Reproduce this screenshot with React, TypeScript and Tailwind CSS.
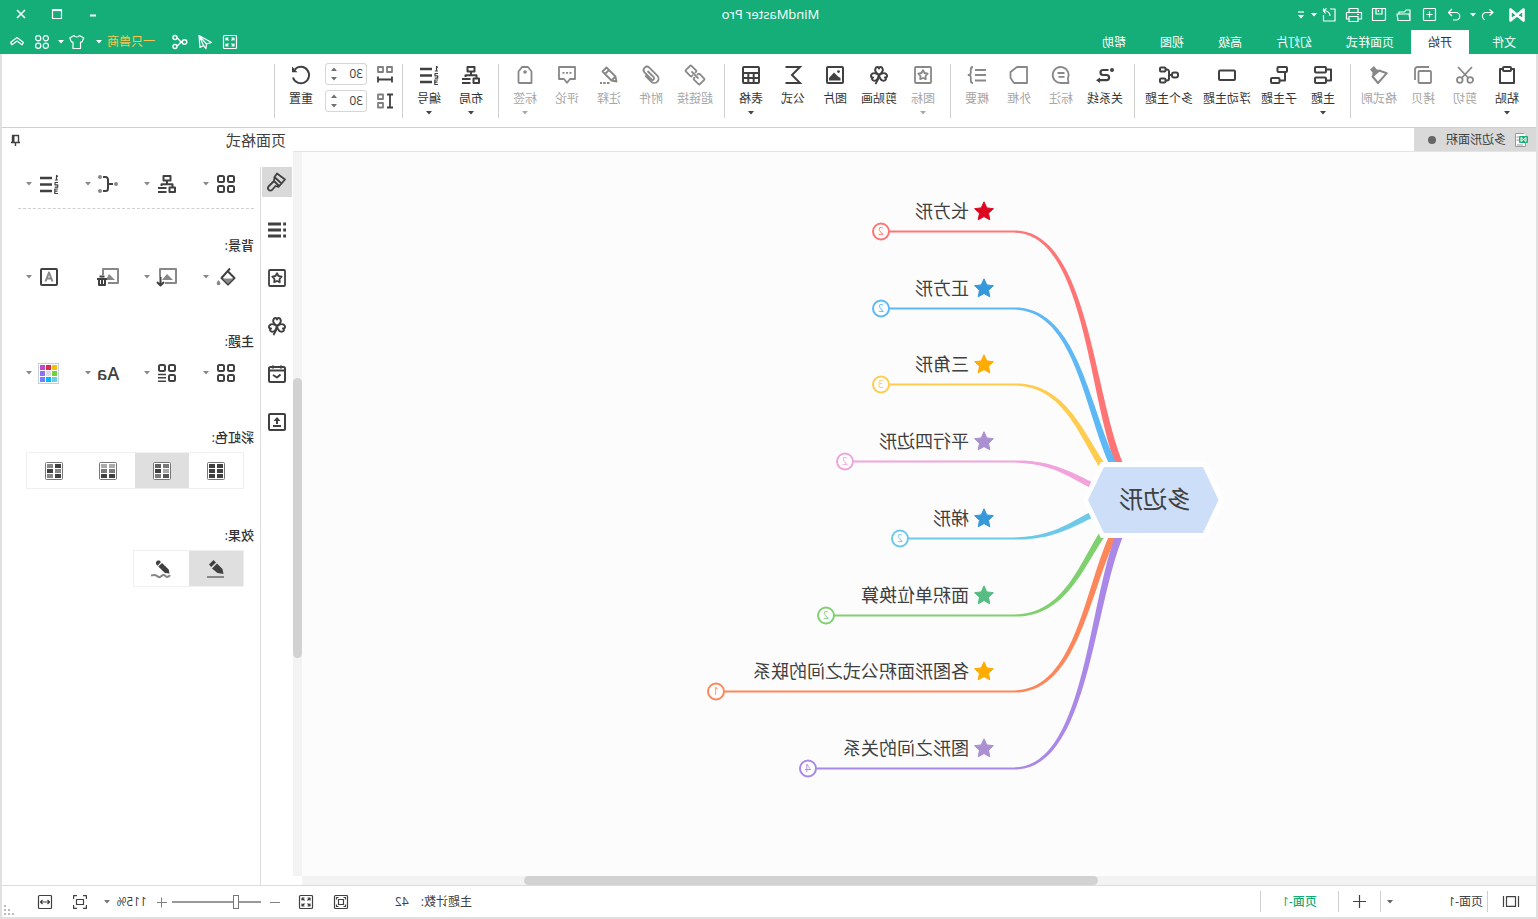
import type { ReactNode } from "react";
import { useState } from "react";

/* ---------- shared pieces ---------- */

type IconProps = { children: ReactNode; w?: number; h?: number; sw?: number; className?: string };

function Icon({ children, w = 18, h = 18, sw = 2, className = "" }: IconProps) {
  return (
    <svg
      width={w}
      height={h}
      viewBox={`0 0 ${w} ${h}`}
      fill="none"
      stroke="currentColor"
      strokeWidth={sw}
      strokeLinejoin="round"
      className={`shrink-0 overflow-visible ${className}`}
      aria-hidden="true"
    >
      {children}
    </svg>
  );
}

const solid = { fill: "currentColor", stroke: "none" };

function Caret({ className = "" }: { className?: string }) {
  return (
    <svg width="6" height="4" viewBox="0 0 6 4" className={`shrink-0 ${className}`} aria-hidden="true">
      <path d="M0 0h6L3 3.6z" fill="currentColor" />
    </svg>
  );
}

const STAR = "M9 4.3l1.500 2.700 3.200.7-2.200 2.300.3 3.200L9 12l-2.800 1.200.3-3.200-2.200-2.300 3.200-.7z";
const HEART = "M9 9.2C6.2 7 4.800 5.600 5.200 3.400 5.700.7 8.500.2 9 2.600c.5-2.400 3.300-1.900 3.800.8.4 2.200-1 3.600-3.800 5.800z";

const icons = {
  paste: (
    <Icon>
      <path d="M5 3H2v14h14V3h-3" />
      <rect x="5" y="1" width="8" height="4" rx="1" />
    </Icon>
  ),
  cut: (
    <Icon sw={1.8}>
      <circle cx="3.8" cy="14" r="2.8" />
      <circle cx="14.2" cy="14" r="2.8" />
      <path d="M2 1l10.3 11M16 1L5.7 12" />
    </Icon>
  ),
  copy: (
    <Icon sw={1.8}>
      <rect x="1" y="5" width="12.5" height="12" rx="1" />
      <path d="M3 1h11.5A2.5 2.5 0 0 1 17 3.500V14" />
    </Icon>
  ),
  format: (
    <Icon sw={2}>
      <path d="M1.200 7.200L9 4.500l6.500 6-5.500 6.500z" />
      <path d="M7.500 4.800L11.500 3.200 14 0l2 1.800 2 1.800-2.500 2.800.5 4.800z" {...solid} />
    </Icon>
  ),
  topic: (
    <Icon>
      <rect x="6" y="1" width="11" height="5.500" rx="1" />
      <rect x="6" y="11.500" width="11" height="5.500" rx="1" />
      <path d="M6 3.500H1v11h5" />
    </Icon>
  ),
  subtopic: (
    <Icon>
      <rect x="1" y="1" width="9.500" height="5" rx="1" />
      <rect x="8.500" y="12" width="8.500" height="5" rx="1" />
      <path d="M3 6v8.500h5.500" />
    </Icon>
  ),
  floating: (
    <Icon>
      <rect x="1" y="4.500" width="16" height="9.500" rx="1" />
    </Icon>
  ),
  multi: (
    <Icon w={20}>
      <rect x="1" y="6.500" width="6" height="5" rx="2" />
      <rect x="13.500" y="1.500" width="5.500" height="4" rx="1" />
      <rect x="13.500" y="12.500" width="5.500" height="4" rx="1" />
      <path d="M13.500 3.500h-1.500a2 2 0 0 0-2 2v7a2 2 0 0 0 2 2h1.500M7 9h3" />
    </Icon>
  ),
  relation: (
    <Icon sw={2.2}>
      <circle cx="2" cy="4" r="2" {...solid} />
      <path d="M5.500 4h5.500a2.500 2.500 0 0 1 0 5H7.500a2.600 2.600 0 0 0 0 5.200H14" />
      <path d="M14 11.400l4 2.800-4 2.800z" {...solid} />
    </Icon>
  ),
  callout: (
    <Icon sw={1.8}>
      <path d="M1.500 17l.6-4.500A8 8 0 1 1 9 17z" />
      <path d="M5.500 7h7M5.500 10.800h6" />
    </Icon>
  ),
  boundary: (
    <Icon sw={1.8}>
      <path d="M1 1h10l6.500 5v6L14 17H1z" />
    </Icon>
  ),
  summary: (
    <Icon sw={1.8}>
      <path d="M0 4h11M0 9h11M0 14.500h11" />
      <path d="M13 1c1.800 0 2.200.8 2.200 2.500V6.500c0 1.500.8 2.500 2.300 2.500-1.500 0-2.300 1-2.300 2.500v3c0 1.700-.4 2.500-2.200 2.500" />
    </Icon>
  ),
  mark: (
    <Icon sw={1.8}>
      <rect x="1" y="1" width="16" height="16" rx="1" />
      <path d={STAR} />
    </Icon>
  ),
  clover: (
    <Icon sw={2}>
      <path d={HEART} />
      <path d={HEART} transform="rotate(-112 9 9)" />
      <path d={HEART} transform="rotate(112 9 9)" />
      <path d="M9 9c.5 4 1.500 6.500 3.600 9" />
    </Icon>
  ),
  picture: (
    <Icon>
      <rect x="1" y="1" width="16" height="16" rx="1" />
      <circle cx="5.500" cy="5.600" r="1.400" {...solid} />
      <path d="M3.500 14.500V12L6 10.500l4-4 5 5.500v2.500z" {...solid} />
    </Icon>
  ),
  formula: (
    <Icon sw={2}>
      <path d="M16.500 1H2l8 8-8 8h14.500" strokeLinejoin="miter" />
    </Icon>
  ),
  table: (
    <Icon>
      <rect x="1" y="1" width="16" height="16" rx="1" />
      <path d="M1 7h16M1 12h16M6.300 7v10M11.700 7v10" />
    </Icon>
  ),
  link: (
    <Icon sw={1.8}>
      <g transform="rotate(-45 9 9)">
        <path d="M7.500 7.600V6a1 1 0 0 0-1-1H0a1 1 0 0 0-1 1v6a1 1 0 0 0 1 1h6.500a1 1 0 0 0 1-1v-1.600" />
        <path d="M10.500 7.600V6a1 1 0 0 1 1-1H18a1 1 0 0 1 1 1v6a1 1 0 0 1-1 1h-6.500a1 1 0 0 1-1-1v-1.600" />
        <path d="M4 9h10" />
      </g>
    </Icon>
  ),
  attach: (
    <Icon sw={1.8}>
      <path d="M12.500 5.500l-6.200 6.200a1.500 1.500 0 0 0 2.200 2.200l7-7a3.400 3.400 0 0 0-4.800-4.800l-8 8a4.300 4.300 0 0 0 6.100 6.100l6-6" transform="translate(0 -.5)" />
    </Icon>
  ),
  note: (
    <Icon sw={1.8}>
      <path d="M1.500 15.500l1-5L11.500 1.500l4 4-9 9zM9 4l4 4M2.500 10.500l4 4" />
      <path d="M8.500 17h2.500M12.300 17h2.500M16 17h2" />
    </Icon>
  ),
  comment: (
    <Icon sw={1.8}>
      <path d="M1 1h16v12h-5l-3 3.800L6 13H1z" />
      <path d="M4.500 6.800h2M8 6.800h2M11.500 6.800h2" />
    </Icon>
  ),
  tag: (
    <Icon sw={1.8}>
      <path d="M2.500 17V5.500L6 1h6l3.500 4.500V16a1 1 0 0 1-1 1z" />
      <circle cx="9" cy="6" r="1.800" {...solid} />
    </Icon>
  ),
  layout: (
    <Icon>
      <rect x="5.500" y="1" width="7" height="4.500" />
      <rect x="1" y="12.500" width="5.500" height="4.500" />
      <path d="M9 5.500V9M3.500 12.500V9.300h11v1.700M9.500 13h8.500M9.500 17h8.500" />
    </Icon>
  ),
  numbering: (
    <Icon>
      <path d="M6 3h12M6 9.500h12M6 16h12" strokeWidth="2.600" />
      <path d="M0 1.500L1.500.5V5M0 5h3.200M0 7.500h3v2.300H.3v2.400h3M0 14h3.200v4.500H0M.5 16.200h2.500" strokeWidth="1.200" />
    </Icon>
  ),
  hspace: (
    <Icon w={16} h={16} sw={1.8}>
      <rect x="1" y="1" width="5" height="5" stroke="#808080" />
      <rect x="10" y="1" width="5" height="5" stroke="#808080" />
      <path d="M1 10.500v6M15 10.500v6M1 13.500h14" />
    </Icon>
  ),
  vspace: (
    <Icon w={16} h={16} sw={1.8}>
      <rect x="10" y="1.500" width="5" height="4.500" stroke="#808080" />
      <rect x="10" y="10" width="5" height="4.500" stroke="#808080" />
      <path d="M0 1.500h6M0 14.500h6M3 1.500v13" />
    </Icon>
  ),
  reset: (
    <Icon w={20} h={20} sw={2}>
      <path d="M2 12.500A8.200 8.200 0 1 0 3.800 4.500" transform="matrix(-1 0 0 1 20 0)" />
      <path d="M19 1.500v5.700h-5.500z" {...solid} />
    </Icon>
  ),
  grid4: (
    <Icon>
      <rect x="1" y="1" width="6" height="6" rx="1.500" />
      <rect x="11" y="1" width="6" height="6" rx="1.500" />
      <rect x="1" y="11" width="6" height="6" rx="1.500" />
      <rect x="11" y="11" width="6" height="6" rx="1.500" />
    </Icon>
  ),
  gridLines: (
    <Icon>
      <rect x="1" y="1" width="6" height="6" rx="1.500" />
      <rect x="11" y="1" width="6" height="6" rx="1.500" />
      <rect x="1" y="11" width="6" height="6" rx="1.500" />
      <path d="M10 10.500h8M10 13.800h8M10 17.200h8" strokeWidth="1.600" />
    </Icon>
  ),
  branch: (
    <Icon w={20} sw={2}>
      <path d="M15 2h-2.500a2.500 2.500 0 0 0-2.500 2.500v9a2.500 2.500 0 0 0 2.500 2.500h2.500M5 9h5" />
      <g fill="#888" stroke="none">
        <circle cx="2" cy="9" r="2" />
        <circle cx="18" cy="2" r="2" />
        <circle cx="18" cy="16" r="2" />
      </g>
    </Icon>
  ),
  fill: (
    <Icon w={20} h={20} sw={2}>
      <path d="M6 1.500l8.500 9.500L8 17.500 1.500 11 8 4.500" />
      <path d="M2.500 11.500h11L8 17z" fill="#888" stroke="none" />
      <path d="M17.500 13c1.500 2 2.200 3 1.600 4.300a1.900 1.900 0 0 1-3.400 0c-.5-1.200.3-2.300 1.800-4.300z" fill="#888" stroke="none" />
    </Icon>
  ),
  bgInsert: (
    <Icon w={20} h={20} sw={2}>
      <path d="M12 16H1V2h16v8" stroke="#888" />
      <path d="M4 13l6-6 5 6z" fill="#888" stroke="none" />
      <path d="M16.500 10v7M13 15l3.500 3.500 3.500-3.500" />
    </Icon>
  ),
  bgDelete: (
    <Icon w={22} h={20} sw={2}>
      <path d="M11 16H1V2h15v6" stroke="#888" />
      <path d="M4 13l6-6 3 6z" fill="#888" stroke="none" />
      <path d="M12 12h10M14 13v5h6v-5M17 13v5M14.500 9.500h5" />
    </Icon>
  ),
  watermark: (
    <Icon>
      <rect x="1" y="1" width="16" height="16" rx="1" />
      <path d="M5.500 13.500L9 4.500l3.500 9M6.500 10.500h5" stroke="#888" />
    </Icon>
  ),
  brush: (
    <Icon w={20} h={20} sw={1.800}>
      <path d="M2 7.500l8-6 2.500 3.500 .5 4 5.500 5.500a2.500 2.500 0 0 1-3.500 3.500l-3.500-4-3 .8zM5.500 11.500l6.500-6M8 14l5-5" />
    </Icon>
  ),
  outline: (
    <Icon>
      <path d="M5 3h13M5 9h13M5 15h13M0 3h2.800M0 9h2.800M0 15h2.800" strokeWidth="2.800" />
    </Icon>
  ),
  calendar: (
    <Icon>
      <rect x="1" y="2" width="16" height="15" rx="1.500" />
      <path d="M1 5.500h16M5 .5v3M13 .5v3M5.500 9.500l3.500 3 4-2.500" />
    </Icon>
  ),
  upload: (
    <Icon>
      <rect x="1" y="1" width="16" height="16" rx="1" />
      <path d="M5 13h8M9 11V6.500" />
      <path d="M5.500 8L9 4l3.500 4z" {...solid} />
    </Icon>
  ),
};

/* ---------- header ---------- */

function Glyph({ children, sw = 1.200 }: { children: ReactNode; sw?: number }) {
  return (
    <Icon w={14} h={14} sw={sw}>
      {children}
    </Icon>
  );
}

const fullscreen = (
  <>
    <rect x=".5" y=".5" width="13" height="13" rx="1" />
    <path d="M3 5.500V3h2.500M8.500 3H11v2.500M11 8.500V11H8.500M5.500 11H3V8.500M3 3l2.500 2.500M11 3L8.500 5.500M11 11L8.500 8.500M3 11l2.500-2.500" />
  </>
);

const quick: { name: string; icon: ReactNode }[] = [
  { name: "重做", icon: <Glyph><path d="M5 1L1.500 4.500 5 8M1.500 4.500h7.500a3.700 3.700 0 0 1 0 7.500H6" transform="matrix(-1 0 0 1 14 0)" /></Glyph> },
  { name: "新建", icon: <Glyph><rect x=".5" y=".5" width="12" height="12" rx="1" /><path d="M6.500 3.500v6M3.500 6.500h6" /></Glyph> },
  { name: "打开", icon: <Glyph><path d="M1 12V2h4l1.500 2H12v2M1 12.500l1-6.500h12l-1 6.500z" /></Glyph> },
  { name: "保存", icon: <Glyph><path d="M.5 .5h13v12h-12l-1-1zM4 .5v5.500h6V.5M7.500 2v2" /></Glyph> },
  { name: "打印", icon: <Glyph><path d="M3 4V.5h9V4M3 11H-.5V4.500h15V11H12M3 8.500h9v5H3zM2 6.500h2" /></Glyph> },
  { name: "导出", icon: <Glyph><path d="M6 1H1v12h11.500V7M12.500 .5v3M6 8c0-3.500 2-5 6-5.500M9.500 .5l3 2-2 3" /></Glyph> },
];

function TitleBar() {
  return (
    <div className="flex h-7 items-center">
      <div className="flex flex-1 items-center pt-[2px]">
        <svg width="16" height="14" viewBox="0 0 16 14" className="ml-[13px] mr-2" role="img" aria-label="MindMaster">
          <path d="M1.500 12.500v-11L8 7l6.500-5.500v11L8 7z" fill="none" stroke="#fff" strokeWidth="2.600" strokeLinejoin="round" />
          <circle cx="8" cy="7" r="2.200" fill="#fff" />
        </svg>
        <button aria-label="撤销" className="flex w-[25px] justify-center">
          <Glyph><path d="M5.500 1.500l-3.500 3 3.500 3M2 4.500h7a3.500 3.500 0 0 1 3 5.500L10.500 12" /></Glyph>
        </button>
        <Caret className="mr-[3px]" />
        {quick.map((q) => (
          <button key={q.name} aria-label={q.name} className="flex w-[25px] justify-center">
            {q.icon}
          </button>
        ))}
        <Caret className="mr-[7px]" />
        <button aria-label="自定义快速访问">
          <Icon w={6} h={8} sw={1.200}>
            <path d="M0 1h6" />
            <path d="M0 4h6L3 7.500z" {...solid} />
          </Icon>
        </button>
      </div>
      <h1 className="text-[13px] leading-4">MindMaster Pro</h1>
      <div className="flex flex-1 items-center justify-end pr-[3px]">
        <button aria-label="最小化" className="flex w-9 justify-center">
          <Icon w={10} h={10}><path d="M2 6.500h6" /></Icon>
        </button>
        <button aria-label="最大化" className="flex w-9 justify-center">
          <Icon w={10} h={10} sw={1.200}><path d="M.5 .5h9v9h-9z" /><path d="M0 1.500h10" /></Icon>
        </button>
        <button aria-label="关闭" className="flex w-9 justify-center">
          <Icon w={8} h={8} sw={1.600}><path d="M0 0l8 8M8 0L0 8" /></Icon>
        </button>
      </div>
    </div>
  );
}

const tabs = ["文件", "开始", "页面样式", "幻灯片", "高级", "视图", "帮助"];

function MenuBar() {
  return (
    <div className="flex h-[26px] items-end text-xs">
      <nav className="flex flex-1 items-end pl-[5px]">
        {tabs.map((t) => (
          <a
            key={t}
            href="#"
            className={
              t === "开始"
                ? "flex h-6 items-center bg-white px-[17px] pt-0.5 text-[#333]"
                : t === "文件"
                  ? "mr-1.5 flex h-6 items-center px-[17px] pt-0.5"
                  : "flex h-6 items-center px-[17px] pt-0.5"
            }
          >
            {t}
          </a>
        ))}
      </nav>
      <div className="flex h-6 items-center pr-[5px]">
        <button aria-label="全屏" className="flex w-[25px] justify-center"><Glyph>{fullscreen}</Glyph></button>
        <button aria-label="发送" className="flex w-[25px] justify-center">
          <Glyph><path d="M13 .5L.5 7.500l5 1.500zM13 .5L12 12.500 8.500 10.500 6 13.500 5.500 9M13 .5L8.500 10.500" /></Glyph>
        </button>
        <button aria-label="分享" className="mr-3 flex w-[25px] justify-center">
          <Glyph sw={1.400}><circle cx="2.500" cy="7" r="2.300" /><circle cx="12" cy="2.500" r="2" /><circle cx="12" cy="11.500" r="2" /><path d="M4.800 7c3 0 3-3.500 5.300-4M4.800 7c3 0 3 3.500 5.300 4" /></Glyph>
        </button>
        <button className="mr-3 flex items-center gap-[5px] text-[#f9c54e]">
          一只兽商
          <Caret className="text-white" />
        </button>
        <button aria-label="皮肤" className="mr-[3px] flex items-center gap-1.5">
          <Glyph><path d="M4.500 .5L.3 3l1.700 4h1.500v6.500h7.500V7h1.500l1.700-4L10 .5C9 2.500 5.500 2.500 4.500 .5z" /></Glyph>
          <Caret />
        </button>
        <button aria-label="应用" className="flex w-[25px] justify-center">
          <Glyph><circle cx="3.200" cy="3.200" r="2.600" /><circle cx="10.800" cy="3.200" r="2.600" /><circle cx="3.200" cy="10.800" r="2.600" /><circle cx="10.800" cy="10.800" r="2.600" /></Glyph>
        </button>
        <button aria-label="收起功能区" className="flex w-[25px] justify-center">
          <Glyph><path d="M.5 7.500L7 2.500l6.500 5-1.500 2.300L7 6 2 9.800z" /></Glyph>
        </button>
      </div>
    </div>
  );
}

/* ---------- ribbon ---------- */

type Tool = { label: string; icon: ReactNode; off?: boolean; menu?: boolean };

const groups: Tool[][] = [
  [
    { label: "粘贴", icon: icons.paste, menu: true },
    { label: "剪切", icon: icons.cut, off: true },
    { label: "拷贝", icon: icons.copy, off: true },
    { label: "格式刷", icon: icons.format, off: true },
  ],
  [
    { label: "主题", icon: icons.topic, menu: true },
    { label: "子主题", icon: icons.subtopic },
    { label: "浮动主题", icon: icons.floating },
    { label: "多个主题", icon: icons.multi },
  ],
  [
    { label: "关系线", icon: icons.relation },
    { label: "标注", icon: icons.callout, off: true },
    { label: "外框", icon: icons.boundary, off: true },
    { label: "概要", icon: icons.summary, off: true },
  ],
  [
    { label: "图标", icon: icons.mark, off: true, menu: true },
    { label: "剪贴画", icon: icons.clover },
    { label: "图片", icon: icons.picture },
    { label: "公式", icon: icons.formula },
    { label: "表格", icon: icons.table, menu: true },
  ],
  [
    { label: "超链接", icon: icons.link, off: true },
    { label: "附件", icon: icons.attach, off: true },
    { label: "注释", icon: icons.note, off: true },
    { label: "评论", icon: icons.comment, off: true },
    { label: "标签", icon: icons.tag, off: true, menu: true },
  ],
  [
    { label: "布局", icon: icons.layout, menu: true },
    { label: "编号", icon: icons.numbering, menu: true },
  ],
];

const toolWidth: Record<number, string> = { 2: "w-[42px]", 3: "w-[46px]", 4: "w-[58px]" };

function ToolButton({ tool }: { tool: Tool }) {
  return (
    <button className={`flex flex-col items-center pt-3 ${toolWidth[tool.label.length]}`}>
      <span className={tool.off ? "text-[#888]" : "text-[#404040]"}>{tool.icon}</span>
      <span className={tool.off ? "mt-[7px] text-xs text-[#a6a6a6]" : "mt-[7px] text-xs text-[#333]"}>{tool.label}</span>
      {tool.menu && <Caret className={tool.off ? "mt-1 text-[#aaa]" : "mt-1 text-[#444]"} />}
    </button>
  );
}

function Rule() {
  return <div className="ml-[5px] mr-1.5 mt-2.5 h-[54px] w-px bg-[#cfcfcf]" />;
}

function Spinner({ label, icon }: { label: string; icon: ReactNode }) {
  const [value, setValue] = useState(30);
  return (
    <div className="flex items-center gap-2.5 text-[#404040]">
      {icon}
      <div className="flex h-[22px] w-[42px] items-center rounded-[3px] border border-[#d6d6d6]">
        <input
          aria-label={label}
          value={value}
          onChange={(e) => setValue(Number(e.target.value) || 0)}
          className="w-[29px] bg-transparent pl-[3px] text-xs outline-none"
        />
        <div className="flex flex-col gap-1.5 text-[#707070]">
          <button aria-label={`${label}增加`} onClick={() => setValue(value + 1)}>
            <Caret className="block rotate-180" />
          </button>
          <button aria-label={`${label}减少`} onClick={() => setValue(value - 1)}>
            <Caret className="block" />
          </button>
        </div>
      </div>
    </div>
  );
}

function Ribbon() {
  return (
    <div className="flex h-[74px] items-start border-b border-[#d0d0d0] bg-white pl-2">
      {groups.map((g, i) => (
        <div key={i} className="flex">
          {g.map((t) => (
            <ToolButton key={t.label} tool={t} />
          ))}
          <Rule />
        </div>
      ))}
      <div className="ml-[3px] mr-[3px] flex flex-col gap-[5px] pt-[9px]">
        <Spinner label="水平间距" icon={icons.hspace} />
        <Spinner label="垂直间距" icon={icons.vspace} />
      </div>
      <button className="flex w-[42px] flex-col items-center pt-[11px] text-[#404040]">
        {icons.reset}
        <span className="mt-1.5 text-xs text-[#333]">重置</span>
      </button>
      <Rule />
    </div>
  );
}

/* ---------- mind map ---------- */

type Branch = { label: string; count: number; line: string; star: string; y: number; end: number; pull: number };

const branches: Branch[] = [
  { label: "长方形", count: 2, line: "#ff7575", star: "#dc0820", y: 79, end: 655, pull: 429 },
  { label: "正方形", count: 2, line: "#5eb8f5", star: "#3498db", y: 156, end: 655, pull: 436 },
  { label: "三角形", count: 3, line: "#ffcc50", star: "#ffab00", y: 232, end: 655, pull: 444 },
  { label: "平行四边形", count: 2, line: "#f2a3dc", star: "#aa90d0", y: 309, end: 691, pull: 458 },
  { label: "梯形", count: 2, line: "#6cc9e8", star: "#3498db", y: 386, end: 636, pull: 458 },
  { label: "面积单位换算", count: 2, line: "#80d070", star: "#56bc82", y: 463, end: 710, pull: 444 },
  { label: "各图形面积公式之间的联系", count: 1, line: "#fb875a", star: "#ffab00", y: 539, end: 820, pull: 436 },
  { label: "图形之间的关系", count: 4, line: "#aa88e8", star: "#aa90d0", y: 616, end: 728, pull: 429 },
];

const ROOT = { x: 382, y: 348 };
const JOINT = 522;

/* Outline of a stroke that narrows from the central topic to the branch line. */
function taper(y: number, pull: number) {
  const xs = [ROOT.x, 449, pull, JOINT];
  const ys = [ROOT.y, ROOT.y, y, y];
  const left: string[] = [];
  const right: string[] = [];
  const steps = 48;
  for (let i = 0; i <= steps; i++) {
    const t = i / steps;
    const u = 1 - t;
    const at = (p: number[]) => u * u * u * p[0] + 3 * u * u * t * p[1] + 3 * u * t * t * p[2] + t * t * t * p[3];
    const slope = (p: number[]) => 3 * u * u * (p[1] - p[0]) + 6 * u * t * (p[2] - p[1]) + 3 * t * t * (p[3] - p[2]);
    const dx = slope(xs);
    const dy = slope(ys);
    const len = Math.hypot(dx, dy) || 1;
    const half = (9 - 6.8 * t) / 2;
    const ox = (-dy / len) * half;
    const oy = (dx / len) * half;
    left.push(`${(at(xs) + ox).toFixed(2)} ${(at(ys) + oy).toFixed(2)}`);
    right.unshift(`${(at(xs) - ox).toFixed(2)} ${(at(ys) - oy).toFixed(2)}`);
  }
  return `M${left.join("L")}L${right.join("L")}Z`;
}

function MindMap() {
  return (
    <main className="relative min-w-0 flex-1 overflow-hidden bg-[#fcfcfc]">
      <svg className="absolute left-0 top-0 h-full w-full" aria-hidden="true">
        {branches.map((b) => (
          <g key={b.label}>
            <path d={taper(b.y + 0.5, b.pull)} fill={b.line} />
            <path d={`M${JOINT} ${b.y + 0.5}H${b.end - 8}`} stroke={b.line} strokeWidth="2.200" />
            <circle cx={b.end} cy={b.y + 0.5} r="8" fill="#fff" stroke={b.line} strokeWidth="2" />
          </g>
        ))}
        <path d="M317.500 348L333 315h99l16 33-16 33h-99z" fill="#fff" stroke="#fff" strokeWidth="10" />
        <path d="M317.500 348L333 315h99l16 33-16 33h-99z" fill="#cddef8" />
      </svg>
      <div className="absolute left-[317px] top-[314px] flex h-[66px] w-[128px] items-center justify-center text-2xl text-[#404040]">
        多边形
      </div>
      {branches.map((b) => (
        <div key={b.label}>
          <div
            className="absolute flex items-center gap-[5px] whitespace-nowrap text-lg leading-6 text-[#404040]"
            style={{ left: 542, top: b.y - 32 }}
          >
            <svg width="20" height="20" viewBox="0 0 20 20" aria-hidden="true">
              <path
                d="M10 .8l2.800 6.100 6.600.8-4.900 4.500 1.300 6.600L10 15.600l-5.800 3.200 1.300-6.600L.6 7.700l6.600-.8z"
                fill={b.star}
                stroke={b.star}
                strokeLinejoin="round"
              />
            </svg>
            {b.label}
          </div>
          <button
            aria-label={`展开${b.label}`}
            className="absolute flex h-4 w-4 items-center justify-center text-[10px] leading-4"
            style={{ left: b.end - 8, top: b.y - 8, color: b.line }}
          >
            {b.count}
          </button>
        </div>
      ))}
    </main>
  );
}

function CanvasColumn() {
  return (
    <section className="flex min-w-0 flex-1 flex-col">
      <div className="flex h-6 border-b border-[#e4e4e4] bg-white">
        <div className="flex w-[122px] items-center bg-[#d9d9d9] pl-2 text-xs text-[#404040]">
          <svg width="14" height="14" viewBox="0 0 14 14" className="mr-2 shrink-0" aria-hidden="true">
            <path d="M4 .5h8.500v13H2.500V3" fill="#fff" stroke="#999" />
            <path d="M8.500 4h3M8.500 7h3M5 12h6" stroke="#999" />
            <rect y="3" width="9" height="7" rx="1" fill="#15b377" />
            <path d="M2 8.500v-4l2.500 2 2.500-2v4l-2.500-2z" fill="none" stroke="#fff" />
          </svg>
          多边形面积
          <span className="ml-2.5 h-2 w-2 rounded-full bg-[#666]" />
        </div>
      </div>
      <div className="flex min-h-0 flex-1">
        <MindMap />
        <div className="w-[9px] bg-[#f3f3f3] pt-[226px]">
          <div className="h-[280px] rounded-full bg-[#d2d2d2]" />
        </div>
      </div>
      <div className="mr-[9px] h-[9px] bg-[#f3f3f3] pl-[438px]">
        <div className="h-[9px] w-[574px] rounded-full bg-[#d2d2d2]" />
      </div>
    </section>
  );
}

/* ---------- side panel ---------- */

function PanelTool({ label, icon, menu = true }: { label: string; icon: ReactNode; menu?: boolean }) {
  return (
    <button aria-label={label} className="flex w-[59px] shrink-0 items-center gap-1.5">
      <span className="flex w-[22px] justify-center">{icon}</span>
      {menu && <Caret className="text-[#888]" />}
    </button>
  );
}

const swatches = ["#efbf0b", "#dc2a50", "#c44bc8", "#70d040", "#dcdcdc", "#9070f0", "#68cfe0", "#00b8ff", "#7080ff"];
const rainbow = [
  { name: "彩虹一", cells: ["#404040", "#404040", "#404040", "#404040", "#404040", "#404040"] },
  { name: "彩虹二", cells: ["#7a7a7a", "#606060", "#aaaaaa", "#404040", "#555555", "#7a7a7a"] },
  { name: "彩虹三", cells: ["#aaaaaa", "#aaaaaa", "#7a7a7a", "#7a7a7a", "#404040", "#404040"] },
  { name: "彩虹四", cells: ["#404040", "#888888", "#888888", "#404040", "#404040", "#888888"] },
];

function RainbowIcon({ cells }: { cells: string[] }) {
  return (
    <svg width="18" height="18" viewBox="0 0 18 18" aria-hidden="true">
      <rect x=".5" y=".5" width="17" height="17" rx="1" fill="#fff" stroke="#777" />
      {cells.map((c, i) => (
        <rect key={i} x={2 + (i % 2) * 8} y={2 + Math.floor(i / 2) * 5} width="6" height="4" fill={c} />
      ))}
    </svg>
  );
}

function Heading({ children }: { children: ReactNode }) {
  return <h3 className="text-[13px] font-medium leading-5 text-[#333]">{children}</h3>;
}

function FormatPanel() {
  const rail = [
    { name: "格式", icon: icons.brush },
    { name: "大纲", icon: icons.outline },
    { name: "图标", icon: icons.mark },
    { name: "剪贴画", icon: icons.clover },
    { name: "任务", icon: icons.calendar },
    { name: "导出", icon: icons.upload },
  ];
  return (
    <aside className="flex w-[291px] shrink-0 flex-col bg-white text-[#404040]">
      <header className="flex h-[39px] items-start justify-between px-[7px] pt-0.5">
        <h2 className="text-[15px] leading-5">页面格式</h2>
        <button aria-label="固定" className="mt-1">
          <Icon w={12} h={12} sw={1.400}>
            <path d="M2.500 8.500v-7h6v7M1 8.500h9M5.500 8.500V12" />
            <path d="M7.500 1.500v7" strokeWidth="2" />
          </Icon>
        </button>
      </header>
      <div className="flex flex-1">
        <nav className="flex w-8 flex-col gap-[18px] pl-px">
          {rail.map((r, i) => (
            <button
              key={r.name}
              aria-label={r.name}
              className={i === 0 ? "flex h-[30px] w-[30px] items-center justify-center bg-[#d9d9d9]" : "flex h-[30px] w-[30px] items-center justify-center"}
            >
              {r.icon}
            </button>
          ))}
        </nav>
        <div className="min-w-0 flex-1 border-l border-[#dcdcdc] pl-1.5 pr-4">
          <div className="flex h-[42px] items-center border-b border-dashed border-[#cfcfcf] pl-[17px] pb-[7px]">
            <PanelTool label="布局" icon={icons.grid4} />
            <PanelTool label="结构" icon={icons.layout} />
            <PanelTool label="连线" icon={icons.branch} />
            <PanelTool label="编号" icon={icons.numbering} />
          </div>
          <div className="mt-[26px]">
            <Heading>背景:</Heading>
            <div className="mt-3 flex h-5 items-center pl-[17px]">
              <PanelTool label="填充" icon={icons.fill} />
              <PanelTool label="插入背景" icon={icons.bgInsert} />
              <PanelTool label="删除背景" icon={icons.bgDelete} menu={false} />
              <PanelTool label="水印" icon={icons.watermark} />
            </div>
          </div>
          <div className="mt-11">
            <Heading>主题:</Heading>
            <div className="mt-3 flex h-5 items-center pl-[17px]">
              <PanelTool label="主题" icon={icons.grid4} />
              <PanelTool label="主题样式" icon={icons.gridLines} />
              <PanelTool label="字体" icon={<span className="text-lg font-semibold leading-5">Aa</span>} />
              <PanelTool
                label="颜色"
                icon={
                  <span className="grid grid-cols-3 gap-px border border-[#c4cfe4] p-px">
                    {swatches.map((c) => (
                      <span key={c} className="h-[5px] w-[5px]" style={{ backgroundColor: c }} />
                    ))}
                  </span>
                }
              />
            </div>
          </div>
          <div className="mt-11">
            <Heading>彩虹色:</Heading>
            <div className="ml-2.5 mt-[5px] flex h-[37px] w-fit border border-[#f0f0f0]">
              {rainbow.map((r, i) => (
                <button
                  key={r.name}
                  aria-label={r.name}
                  className={i === 1 ? "flex w-[54px] items-center justify-center bg-[#dfdfdf]" : "flex w-[54px] items-center justify-center"}
                >
                  <RainbowIcon cells={r.cells} />
                </button>
              ))}
            </div>
          </div>
          <div className="mt-9">
            <Heading>效果:</Heading>
            <div className="ml-2.5 mt-[5px] flex h-[37px] w-fit border border-[#f0f0f0]">
              <button aria-label="常规" className="flex w-[54px] items-center justify-center bg-[#dfdfdf]">
                <Icon w={18} h={18}>
                  <path d="M1 17h17" stroke="#888" />
                  <path d="M1.500 14l1-5 5.500-5.500 5 5L7.500 13zM9 2.500L11.500 0 16 4.500 13.800 7z" {...solid} />
                </Icon>
              </button>
              <button aria-label="手绘" className="flex w-[55px] items-center justify-center">
                <Icon w={20} h={18}>
                  <path d="M1 15c1 2 3 2.500 4.500 1s2.500-1.500 4 0 3 1.500 4.500 0 2.500-1.500 6-.5" stroke="#888" />
                  <path d="M1.500 13.500l.8-4L9 3l3.700 3.500L6 13zM10 2l1.500-1.500 2 0 1.500 1.500v2L13.500 5.700z" {...solid} />
                </Icon>
              </button>
            </div>
          </div>
        </div>
      </div>
    </aside>
  );
}

/* ---------- status bar ---------- */

function StatusBar() {
  const [zoom, setZoom] = useState(27);
  return (
    <footer className="flex h-8 items-center border-t border-[#dcdcdc] bg-white text-xs text-[#404040]">
      <button aria-label="页面列表" className="ml-[17px] mr-[15px]">
        <Icon w={16} h={11} sw={1.200}>
          <path d="M.5 0v11M15.500 0v11M3.500 .6h9v9.800h-9z" />
        </Icon>
      </button>
      <div className="h-[21px] w-px bg-[#cfcfcf]" />
      <div className="grid w-[106px] items-center">
        <select aria-label="页面" className="col-start-1 row-start-1 appearance-none bg-transparent pl-1 outline-none">
          <option>页面-1</option>
        </select>
        <Caret className="pointer-events-none col-start-1 row-start-1 mr-1.5 justify-self-end text-[#666]" />
      </div>
      <div className="h-[21px] w-px bg-[#cfcfcf]" />
      <button aria-label="新建页面" className="flex w-[41px] justify-center">
        <Icon w={13} h={13} sw={1.200}><path d="M0 6.500h13M6.500 0v13" /></Icon>
      </button>
      <div className="h-[21px] w-px bg-[#cfcfcf]" />
      <a href="#" className="flex w-[77px] justify-center font-medium text-[#14ab73]">页面-1</a>
      <div className="h-[21px] w-px bg-[#cfcfcf]" />
      <div className="ml-auto mr-9 flex gap-3">
        <span>主题计数:</span>
        <span>42</span>
      </div>
      <button aria-label="适应页面" className="flex w-[35px] justify-center">
        <Glyph><rect x=".5" y=".5" width="13" height="13" rx="1" /><path d="M4.500 4.500h5v5h-5zM2.500 4.500v-2h2M9.500 2.500h2v2M11.500 9.500v2h-2M4.500 11.500h-2v-2" /></Glyph>
      </button>
      <button aria-label="全屏显示" className="flex w-[35px] justify-center"><Glyph>{fullscreen}</Glyph></button>
      <button aria-label="缩小" className="mx-[9px] text-[#808080]">
        <Icon w={10} h={10} sw={1}><path d="M0 5.500h10" /></Icon>
      </button>
      <input
        type="range"
        aria-label="缩放"
        value={zoom}
        onChange={(e) => setZoom(Number(e.target.value))}
        className="h-[14px] w-[89px] appearance-none bg-transparent [&::-webkit-slider-runnable-track]:h-0.5 [&::-webkit-slider-runnable-track]:bg-[#999] [&::-webkit-slider-thumb]:-mt-1.5 [&::-webkit-slider-thumb]:h-[14px] [&::-webkit-slider-thumb]:w-1.5 [&::-webkit-slider-thumb]:appearance-none [&::-webkit-slider-thumb]:border [&::-webkit-slider-thumb]:border-[#777] [&::-webkit-slider-thumb]:bg-white"
      />
      <button aria-label="放大" className="ml-[5px] mr-2.5 text-[#808080]">
        <Icon w={10} h={10} sw={1}><path d="M0 5.500h10M5.500 .5v10" /></Icon>
      </button>
      <button className="mr-1.5 flex w-[43px] items-center justify-between">
        115%
        <Caret className="text-[#777]" />
      </button>
      <button aria-label="选区居中" className="flex w-[35px] justify-center">
        <Glyph><path d="M.6 4V.6H4M10 .6h3.400V4M13.400 10v3.400H10M4 13.400H.6V10M3.500 4.500h7v5h-7z" /></Glyph>
      </button>
      <button aria-label="适应宽度" className="mr-3.5 flex w-[35px] justify-center">
        <Glyph><rect x=".5" y=".5" width="13" height="13" rx="1" /><path d="M2.500 7h9M4.500 5l-2 2 2 2M9.500 5l2 2-2 2" /></Glyph>
      </button>
      <svg width="10" height="10" viewBox="0 0 10 10" className="mb-0.5 mr-0.5 self-end" aria-hidden="true">
        <path d="M8 0h2v2H8zM4 4h2v2H4zM8 4h2v2H8zM0 8h2v2H0zM4 8h2v2H4zM8 8h2v2H8z" fill="#bbb" />
      </svg>
    </footer>
  );
}

/* The whole window is drawn as its own mirror image. */
export default function App() {
  return (
    <div className="flex h-screen min-h-[640px] w-full -scale-x-100 flex-col overflow-hidden bg-white font-['Open_Sans','Noto_Sans_CJK_SC',sans-serif]">
      <header className="bg-[#15ae79] text-white">
        <TitleBar />
        <MenuBar />
      </header>
      <div className="flex min-h-0 flex-1 flex-col border-x-2 border-b-2 border-[#e0e0e0]">
        <Ribbon />
        <div className="flex min-h-0 flex-1">
          <CanvasColumn />
          <FormatPanel />
        </div>
        <StatusBar />
      </div>
    </div>
  );
}
